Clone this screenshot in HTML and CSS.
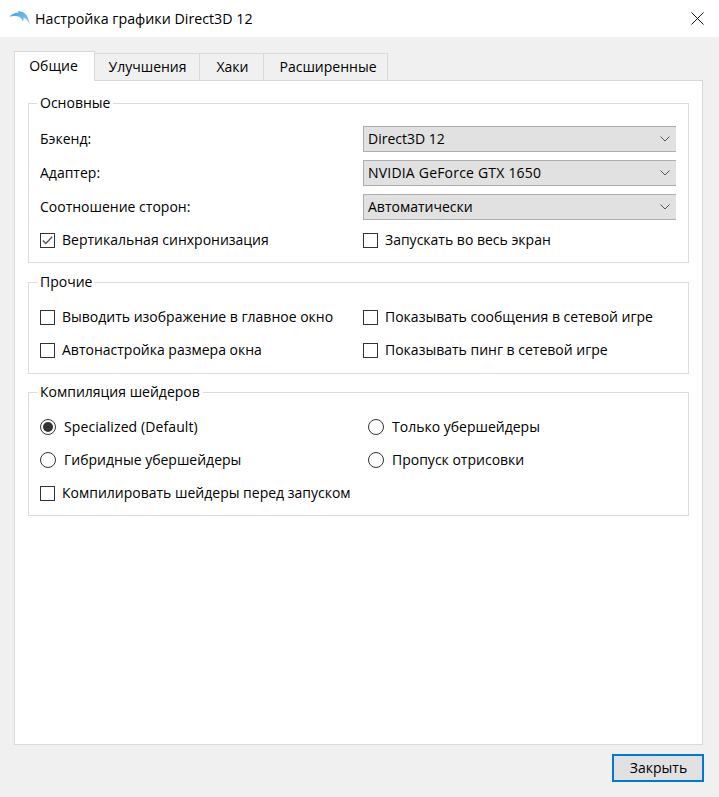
FILE: index.html
```html
<!DOCTYPE html>
<html lang="ru">
<head>
<meta charset="utf-8">
<title>Настройка графики Direct3D 12</title>
<link rel="stylesheet" href="styles.css">
</head>
<body>
<header class="titlebar">
  <svg class="logo" width="21" height="14" viewBox="0 0 21 14"><defs><linearGradient id="dolphin" x1="0" y1="0" x2="1" y2="1"><stop offset="0" stop-color="#3f9fdc"/><stop offset="1" stop-color="#8fcdf0"/></linearGradient></defs><path fill="url(#dolphin)" d="M0.3 5.8C2.5 3 6 1.4 9.8 1.4L8.6 0.3C11 -0.2 13.6 0.5 15.2 2C18 3.8 20 7.5 20.7 13.6C19 10 16.8 7.8 14.6 6.6C14.9 8.2 14.6 9.4 13.8 10.2C13.3 8.6 12.2 7 10.4 5.9C7.6 4.6 4 4.6 0.3 5.8Z"/></svg>
  <span class="title">Настройка графики Direct3D 12</span>
  <svg class="close" width="13" height="13" viewBox="0 0 13 13"><path d="M0.5 0.5L12.5 12.5M12.5 0.5L0.5 12.5" stroke="#111" stroke-width="1" fill="none"/></svg>
</header>
<main class="content">
  <nav class="tabs">
    <div class="tab active t1">Общие</div>
    <div class="tab t2">Улучшения</div>
    <div class="tab t3">Хаки</div>
    <div class="tab t4">Расширенные</div>
  </nav>
  <section class="pane">
    <fieldset class="group g1">
      <legend>Основные</legend>
      <div class="form">
        <label class="lbl">Бэкенд:</label>
        <div class="combo"><span>Direct3D 12</span><svg class="chev" width="10" height="6" viewBox="0 0 10 6"><path d="M0.5 0.5L5 5L9.5 0.5" stroke="#555" fill="none"/></svg></div>
        <label class="lbl">Адаптер:</label>
        <div class="combo"><span class="latin">NVIDIA GeForce GTX 1650</span><svg class="chev" width="10" height="6" viewBox="0 0 10 6"><path d="M0.5 0.5L5 5L9.5 0.5" stroke="#555" fill="none"/></svg></div>
        <label class="lbl">Соотношение сторон:</label>
        <div class="combo"><span>Автоматически</span><svg class="chev" width="10" height="6" viewBox="0 0 10 6"><path d="M0.5 0.5L5 5L9.5 0.5" stroke="#555" fill="none"/></svg></div>
        <div class="check"><span class="box"><svg width="11" height="9" viewBox="0 0 11 9"><path d="M0.8 4.5L3.8 7.5L10.2 0.8" stroke="#555" stroke-width="1.4" fill="none"/></svg></span>Вертикальная синхронизация</div>
        <div class="check"><span class="box"></span>Запускать во весь экран</div>
      </div>
    </fieldset>
    <fieldset class="group g2">
      <legend>Прочие</legend>
      <div class="form">
        <div class="check"><span class="box"></span>Выводить изображение в главное окно</div>
        <div class="check"><span class="box"></span>Показывать сообщения в сетевой игре</div>
        <div class="check"><span class="box"></span>Автонастройка размера окна</div>
        <div class="check"><span class="box"></span>Показывать пинг в сетевой игре</div>
      </div>
    </fieldset>
    <fieldset class="group g3">
      <legend>Компиляция шейдеров</legend>
      <div class="form radios">
        <div class="radio"><span class="dot on"></span><span class="latin-soft">Specialized (Default)</span></div>
        <div class="radio second"><span class="dot"></span>Только убершейдеры</div>
        <div class="radio"><span class="dot"></span>Гибридные убершейдеры</div>
        <div class="radio second"><span class="dot"></span>Пропуск отрисовки</div>
        <div class="check"><span class="box"></span>Компилировать шейдеры перед запуском</div>
      </div>
    </fieldset>
  </section>
  <footer class="actions"><button class="btn">Закрыть</button></footer>
</main>
</body>
</html>
```
FILE: styles.css
```css
* { box-sizing: border-box; }
html, body { margin: 0; height: 100%; }
body {
  width: 719px;
  height: 797px;
  overflow: hidden;
  display: flex;
  flex-direction: column;
  background: #f0f0f0;
  color: #000;
  font-family: "Open Sans", "Noto Sans", sans-serif;
  font-size: 14px;
  line-height: 20px;
}
.titlebar {
  height: 37px;
  flex: none;
  background: #fff;
  display: flex;
  align-items: center;
  padding: 0 15px 0 9px;
}
.logo { flex: none; margin-top: -2px; }
.title { margin-left: 5px; flex: 1; font-size: 14.25px; }
.close { flex: none; margin-top: -1px; }
.content {
  flex: 1;
  display: flex;
  flex-direction: column;
  padding: 14px 16px 15px 14px;
  min-height: 0;
}
.tabs { display: flex; align-items: flex-end; height: 30px; flex: none; position: relative; z-index: 1; margin-bottom: -1px; }
.tab {
  height: 27px;
  margin-bottom: 1px;
  border: 1px solid #d9d9d9;
  border-left: 0;
  border-bottom: 0;
  background: #f0f0f0;
  display: flex;
  align-items: center;
  justify-content: center;
}
.tab.active { height: 30px; margin-bottom: 0; background: #fff; border-left: 1px solid #d9d9d9; padding: 0 2px 2px 0; }
.t1 { width: 81px; }
.t2 { width: 105px; padding-left: 1px; }
.t3 { width: 64px; padding-left: 2px; }
.t4 { width: 124px; padding-left: 5px; }
.pane {
  flex: 1;
  min-height: 0;
  background: #fff;
  border: 1px solid #d9d9d9;
  padding: 12px 13px 0 13px;
  display: flex;
  flex-direction: column;
}
.group {
  margin: 0;
  border: 1px solid #dcdcdc;
  padding: 0 12px 0 11px;
  min-width: 0;
  flex: none;
}
.group legend { padding: 0 3px; margin-left: -3px; line-height: 20px; }
.form { display: grid; grid-template-columns: 323px 313px; align-items: center; }
.g1 { height: 170px; }
.g1 .form { padding-top: 13px; grid-template-rows: 26px 26px 26px 24px; row-gap: 8px; }
.g2 { height: 102px; margin-top: 9px; }
.g2 .form { padding-top: 13px; grid-template-rows: 24px 24px; row-gap: 9px; }
.g3 { height: 134px; margin-top: 8px; }
.g3 .form { padding-top: 13px; grid-template-rows: 24px 24px 24px; row-gap: 9px; }
.lbl { display: block; }
.combo {
  height: 26px;
  background: #e1e1e1;
  border: 1px solid #adadad;
  border-right: 0;
  padding: 0 6px 0 4px;
  display: flex;
  align-items: center;
  justify-content: space-between;
}
.latin { letter-spacing: 0.2px; }
.latin-soft { letter-spacing: 0.1px; }
.chev { flex: none; }
.check, .radio { display: flex; align-items: center; white-space: nowrap; }
.box {
  width: 15px;
  height: 15px;
  border: 1px solid #333;
  background: #fff;
  margin-right: 7px;
  flex: none;
  display: flex;
  align-items: center;
  justify-content: center;
}
.dot {
  width: 16px;
  height: 16px;
  border: 1px solid #333;
  border-radius: 50%;
  background: #fff;
  margin-right: 8px;
  flex: none;
  display: flex;
  align-items: center;
  justify-content: center;
}
.dot.on::after { content: ""; width: 10px; height: 10px; border-radius: 50%; background: #333; }
.second { padding-left: 5px; }
.actions { flex: none; display: flex; justify-content: flex-end; padding-top: 9px; }
.btn {
  width: 92px;
  height: 28px;
  background: #e1e1e1;
  border: 2px solid #0078d7;
  font: inherit;
  color: #000;
  padding: 0 0 0 1px;
  margin-right: -1px;
}
```
